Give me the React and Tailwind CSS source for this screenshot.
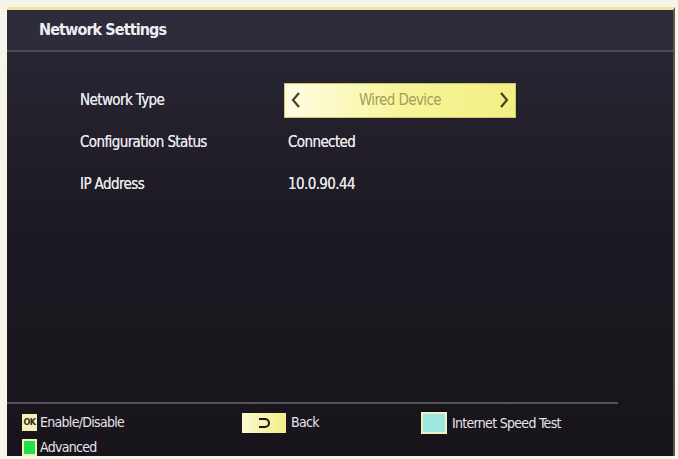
import React from "react";

const font = { fontFamily: '"DejaVu Sans Condensed", "DejaVu Sans", sans-serif' };

function Row({ label, children }) {
  return (
    <div className="flex items-center h-[42px]">
      <div className="w-[208px] text-[15px] text-[#e8e6ea] tracking-[-0.6px] [text-shadow:0_0_0.6px_#e8e6ea]">{label}</div>
      <div className="flex-1">{children}</div>
    </div>
  );
}

export default function App() {
  return (
    <div className="w-[678px] h-[459px] bg-[#f7f4ea] pt-[7px] pl-[7px] pr-[3px] pb-[3px]" style={font}>
      <div className="w-full h-full flex flex-col border-t-[3px] border-[#f3e3a6] bg-gradient-to-b from-[#2b2837] via-[#1c1922] to-[#17141b] border-r-[2px] border-r-[#5e5750]">
        <div className="h-[42px] flex items-center pl-[32px] border-b-[2px] border-[#4d4a56] bg-[#2e2b3a]">
          <span className="text-[16px] font-bold text-[#eeeef2] tracking-[-0.9px]">Network Settings</span>
        </div>
        <div className="flex-1 pl-[73px] pt-[27px]">
          <Row label="Network Type">
            <div className="ml-[-4px] w-[232px] h-[35px] flex items-center justify-between px-[6px] bg-gradient-to-r from-[#fffde4] via-[#f8f59a] to-[#f2ef84] border border-[#ccc86a]">
              <svg width="10" height="18" viewBox="0 0 10 18"><path d="M8 2 L2 9 L8 16" fill="none" stroke="#444225" strokeWidth="2.2" /></svg>
              <span className="text-[15px] text-[#a39e5a] tracking-[-0.6px]">Wired Device</span>
              <svg width="10" height="18" viewBox="0 0 10 18"><path d="M2 2 L8 9 L2 16" fill="none" stroke="#444225" strokeWidth="2.2" /></svg>
            </div>
          </Row>
          <Row label="Configuration Status">
            <span className="text-[15px] text-[#e8e6ea] tracking-[-0.6px] [text-shadow:0_0_0.6px_#e8e6ea]">Connected</span>
          </Row>
          <Row label="IP Address">
            <span className="text-[15px] text-[#e8e6ea] tracking-[-0.6px] [text-shadow:0_0_0.6px_#e8e6ea]">10.0.90.44</span>
          </Row>
        </div>
        <div className="mr-[55px] h-[2px] bg-[#55525c]" />
        <div className="h-[52px] flex pl-[15px] pt-[8px] text-[14px] text-[#e6e4ea] tracking-[-0.7px]">
          <div className="w-[220px] flex flex-col gap-[4px]">
            <div className="flex items-center gap-[3px]">
              <span className="w-[15px] h-[17px] bg-[#f3f0b8] text-[#2f2d1c] text-[9px] font-bold tracking-[-0.5px] flex items-center justify-center leading-none">OK</span>
              <span>Enable/Disable</span>
            </div>
            <div className="flex items-center gap-[3px]">
              <span className="w-[15px] h-[17px] bg-[#f3f0b8] p-[2px] flex"><span className="flex-1 bg-[#22e04a]" /></span>
              <span>Advanced</span>
            </div>
          </div>
          <div className="w-[179px] flex items-start">
            <div className="flex items-center gap-[5px]">
              <span className="w-[44px] h-[20px] bg-gradient-to-r from-[#fbfad0] to-[#f2ee86] flex items-center justify-center">
                <svg width="14" height="12" viewBox="0 0 14 12"><path d="M2 2 H8 A4 4 0 0 1 8 10 H2" fill="none" stroke="#1d1c14" strokeWidth="2" /></svg>
              </span>
              <span>Back</span>
            </div>
          </div>
          <div className="flex items-start">
            <div className="flex items-center gap-[5px]">
              <span className="w-[26px] h-[22px] bg-[#f2f0c4] p-[2px] flex"><span className="flex-1 bg-[#9ee6e0]" /></span>
              <span>Internet Speed Test</span>
            </div>
          </div>
        </div>
      </div>
    </div>
  );
}
